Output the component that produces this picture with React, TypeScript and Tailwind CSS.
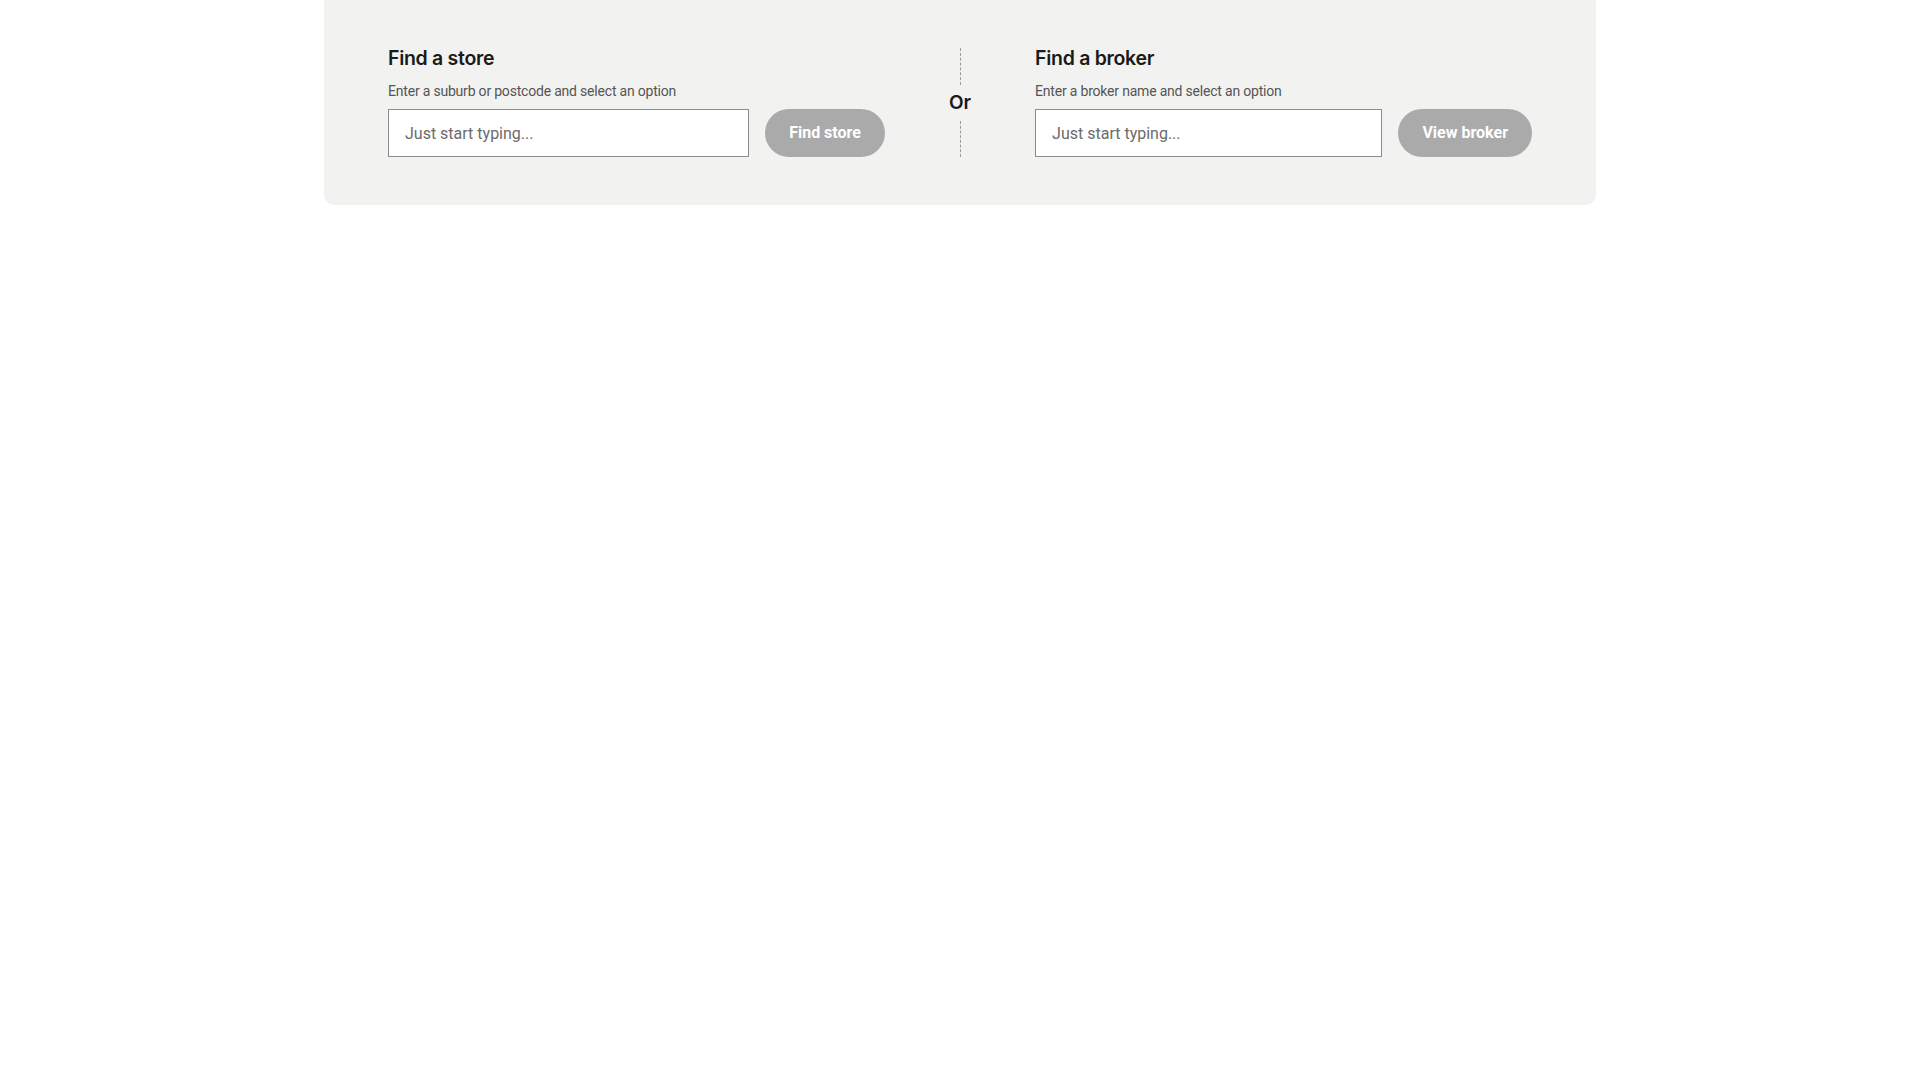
import type { ReactNode } from "react";

const body = { fontFamily: "Roboto, 'Liberation Sans', sans-serif" };
const head = { fontFamily: "Inter, 'Noto Sans', sans-serif" };

function Finder({
  title,
  hint,
  action,
}: {
  title: string;
  hint: string;
  action: string;
}) {
  return (
    <div className="flex flex-col">
      <h2 style={head} className="text-[19.5px] leading-[20px] font-semibold tracking-[-0.3px] text-[#1a1a1a]">
        {title}
      </h2>
      <p style={body} className="mt-[14px] text-[14px] leading-[18px] text-[#555] tracking-[-0.2px]">
        {hint}
      </p>
      <div className="mt-[9px] flex items-center gap-4">
        <input
          type="text"
          placeholder="Just start typing..."
          style={body}
          className="h-12 flex-1 min-w-0 border border-[#8c8c8c] bg-white px-4 text-[16px] text-[#333] placeholder:text-[#6b6b6b] focus:outline-none"
        />
        <Pill>{action}</Pill>
      </div>
    </div>
  );
}

function Pill({ children }: { children: ReactNode }) {
  return (
    <button
      style={body}
      className="h-12 shrink-0 rounded-full bg-[#aaaaaa] px-6 text-[16px] font-bold text-white"
    >
      {children}
    </button>
  );
}

export default function App() {
  return (
    <div className="min-h-screen bg-white">
      <div className="mx-auto w-[1272px] rounded-b-[10px] bg-[#f2f2f1] px-16 py-12">
        <div className="grid grid-cols-[1fr_auto_1fr] gap-16">
          <Finder
            title="Find a store"
            hint="Enter a suburb or postcode and select an option"
            action="Find store"
          />
          <div className="flex flex-col items-center">
            <div className="flex-1 border-l border-dashed border-[#9a9a9a]" />
            <span style={head} className="py-[6px] text-[19px] leading-[24px] font-semibold text-[#1a1a1a]">
              Or
            </span>
            <div className="flex-1 border-l border-dashed border-[#9a9a9a]" />
          </div>
          <Finder
            title="Find a broker"
            hint="Enter a broker name and select an option"
            action="View broker"
          />
        </div>
      </div>
    </div>
  );
}
